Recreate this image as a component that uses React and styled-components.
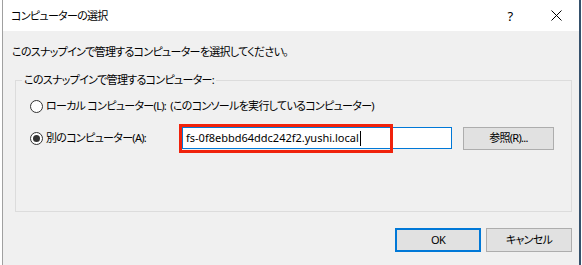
import React from 'react';
import styled, { createGlobalStyle } from 'styled-components';

const GlobalStyle = createGlobalStyle`
    html, body {
        margin: 0;
        padding: 0;
        background: #e6e6e6;
    }
    body {
        font-family: "Noto Sans", "Noto Sans CJK JP", sans-serif;
        font-size: 11px;
        letter-spacing: -0.7px;
        font-feature-settings: "palt";
        color: #000000;
    }
`;

const Desktop = styled.div`
    width: 582px;
    height: 265px;
    display: flex;
    overflow: hidden;
    background: #ffffff;
`;

const Window = styled.div`
    margin-left: 2px;
    width: 576px;
    height: 265px;
    display: flex;
    flex-direction: column;
    background: #f0f0f0;
    border-left: 1px solid #a0a0a0;
    border-right: 2px solid #35516c;
`;

const TitleBar = styled.div`
    height: 31px;
    flex: none;
    display: flex;
    align-items: center;
    background: #ffffff;
`;

const Title = styled.div`
    flex: 1;
    padding-left: 8px;
    line-height: 16px;
`;

const CaptionButton = styled.div`
    width: 46px;
    height: 31px;
    display: flex;
    align-items: center;
    justify-content: center;
    font-size: 13px;
    color: #000000;
`;

const Content = styled.div`
    flex: 1;
    display: flex;
    flex-direction: column;
    padding: 0 7px 0 9px;
`;

const Instruction = styled.div`
    margin-top: 13px;
    line-height: 16px;
`;

const GroupBox = styled.fieldset`
    margin: 12px 0 0 3px;
    padding: 6px 0 61px 0;
    min-width: 0;
    border: 1px solid #dcdcdc;
    display: flex;
    flex-direction: column;
    gap: 8px;
`;

const GroupLabel = styled.legend`
    margin-left: 6px;
    padding: 0 2px;
    line-height: 16px;
`;

const Row = styled.div`
    height: 24px;
    display: flex;
    align-items: center;
    padding-left: 14px;
`;

const Radio = styled.span`
    width: 11px;
    height: 11px;
    flex: none;
    border: 1px solid #333333;
    border-radius: 50%;
    background: #ffffff;
    display: flex;
    align-items: center;
    justify-content: center;
    margin-right: 3px;

    &::after {
        content: '';
        width: 7px;
        height: 7px;
        border-radius: 50%;
        background: #333333;
        display: ${props => props.checked ? 'block' : 'none'};
    }
`;

const Label = styled.span`
    line-height: 16px;
    white-space: pre;
    width: ${props => props.width || 'auto'};
`;

const FieldWrap = styled.div`
    position: relative;
    width: 270px;
    height: 22px;
    margin-right: 11px;
`;

const TextField = styled.div`
    box-sizing: border-box;
    width: 100%;
    height: 100%;
    background: #ffffff;
    border: 1px solid #0078d7;
    padding: 0 0 0 3px;
    display: flex;
    align-items: center;
    line-height: 16px;
    white-space: nowrap;
    letter-spacing: 0;
`;

const Caret = styled.span`
    width: 1px;
    height: 15px;
    background: #000000;
    margin-left: 1px;
`;

const Highlight = styled.div`
    position: absolute;
    left: -3px;
    top: -3px;
    width: 208px;
    height: 23px;
    border: 3px solid #f0220c;
    pointer-events: none;
`;

const Button = styled.div`
    box-sizing: border-box;
    width: ${props => props.width}px;
    height: ${props => props.height || 24}px;
    background: #e1e1e1;
    border: ${props => props.primary ? '2px solid #0078d7' : '1px solid #adadad'};
    display: flex;
    align-items: center;
    justify-content: center;
    line-height: 16px;
`;

const Footer = styled.div`
    margin-top: 16px;
    display: flex;
    justify-content: flex-end;
    gap: 5px;
`;

const CloseIcon = () => (
    <svg width="11" height="11" viewBox="0 0 11 11">
        <path d="M0.5 0.5 L10.5 10.5 M10.5 0.5 L0.5 10.5" stroke="#000" strokeWidth="1" fill="none" />
    </svg>
);

export default function App() {
    return (
        <>
            <GlobalStyle />
            <Desktop>
                <Window>
                    <TitleBar>
                        <Title>コンピューターの選択</Title>
                        <CaptionButton>?</CaptionButton>
                        <CaptionButton><CloseIcon /></CaptionButton>
                    </TitleBar>
                    <Content>
                        <Instruction>このスナップインで管理するコンピューターを選択してください。</Instruction>
                        <GroupBox>
                            <GroupLabel>このスナップインで管理するコンピューター:</GroupLabel>
                            <Row>
                                <Radio />
                                <Label>{'ローカル コンピューター(L):  (このコンソールを実行しているコンピューター)'}</Label>
                            </Row>
                            <Row>
                                <Radio checked />
                                <Label width="136px">別のコンピューター(A):</Label>
                                <FieldWrap>
                                    <TextField>
                                        fs-0f8ebbd64ddc242f2.yushi.local<Caret />
                                    </TextField>
                                    <Highlight />
                                </FieldWrap>
                                <Button width={91} height={23}>参照(R)...</Button>
                            </Row>
                        </GroupBox>
                        <Footer>
                            <Button primary width={86}>OK</Button>
                            <Button width={86}>キャンセル</Button>
                        </Footer>
                    </Content>
                </Window>
            </Desktop>
        </>
    );
}
